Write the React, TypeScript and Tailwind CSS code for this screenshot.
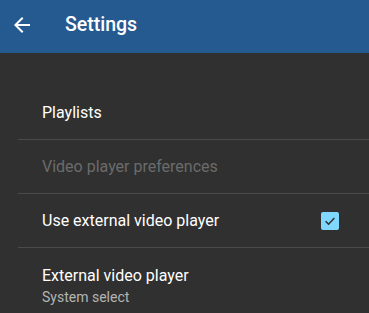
const ROWS = [
  { title: "Playlists" },
  { title: "Video player preferences", disabled: true },
  { title: "Use external video player", checked: true },
  { title: "External video player", summary: "System select" },
];

function Check() {
  return (
    <span className="flex h-[18px] w-[18px] items-center justify-center rounded-[2px] bg-[#80d8ff]">
      <svg width="14" height="14" viewBox="0 0 24 24" fill="none">
        <path d="M4.5 12.5l5 5 10-10.5" stroke="#303030" strokeWidth="2.6" />
      </svg>
    </span>
  );
}

export default function App() {
  return (
    <div
      className="h-[313px] w-[369px] overflow-hidden bg-[#303030]"
      style={{ fontFamily: "Roboto, 'Noto Sans', sans-serif" }}
    >
      {/* App bar */}
      <div className="flex h-[53px] items-center bg-[#255a91] pb-[4px] text-white">
        <svg className="ml-[10px]" width="24" height="24" viewBox="0 0 24 24" fill="white">
          <path d="M20 11H7.83l5.59-5.59L12 4l-8 8 8 8 1.41-1.41L7.83 13H20v-2z" />
        </svg>
        <span className="ml-[31px] text-[19.5px] font-medium">Settings</span>
      </div>

      <div className="pt-[33px]">
        {ROWS.map((row, i) => (
          <div key={row.title}>
            {i > 0 && <div className="ml-[18px] h-px bg-[#4a4a4a]" />}
            <div
              className={
                "flex min-h-[53px] pl-[42px] pr-[30px] " +
                (row.summary ? "items-start pt-[18px]" : "items-center")
              }
            >
              <div className="flex-1">
                <div
                  className={
                    "text-[16px] leading-5 " +
                    (row.disabled ? "text-[#6b6b6b]" : "text-white")
                  }
                >
                  {row.title}
                </div>
                {row.summary && (
                  <div className="text-[14px] leading-[22px] text-[#b4b4b4]">{row.summary}</div>
                )}
              </div>
              {row.checked && <Check />}
            </div>
          </div>
        ))}
      </div>
    </div>
  );
}
